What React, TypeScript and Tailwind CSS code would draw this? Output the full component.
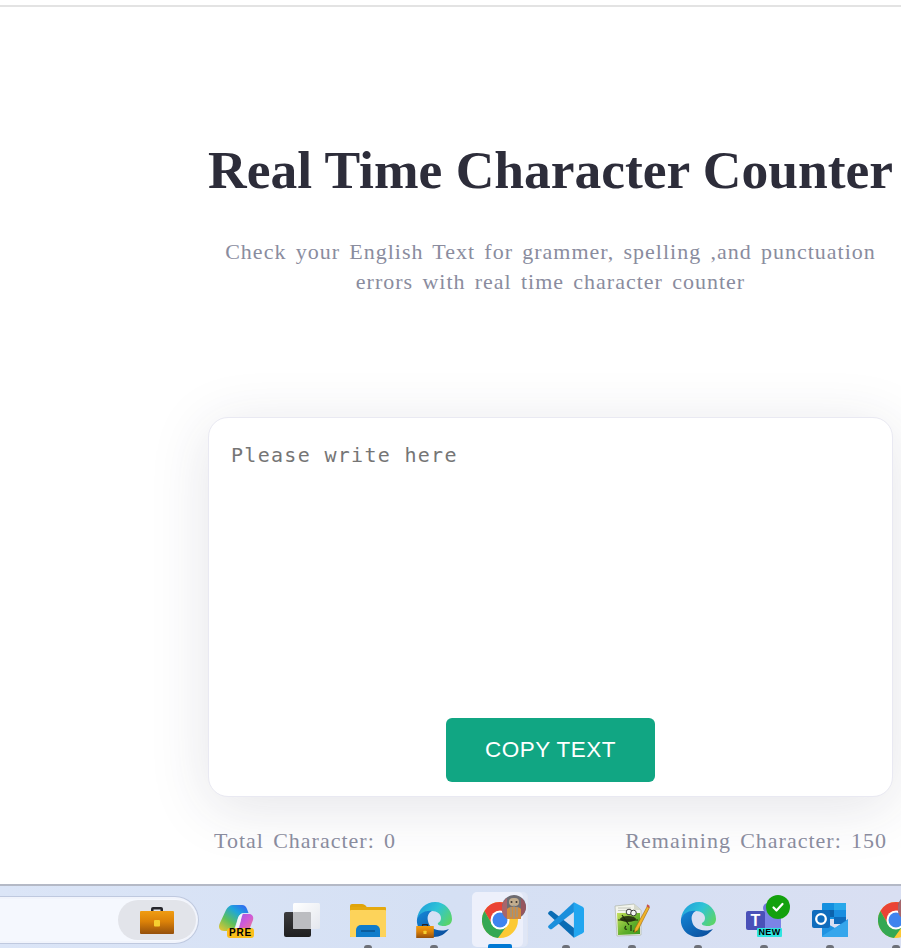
import React from "react";

const Dot = () => <span className="absolute bottom-0 left-1/2 -ml-1 h-[3px] w-2 rounded-t-full bg-[#6d7078]" />;

const Briefcase = ({ w = 34, h = 27, id = "bc" }: { w?: number; h?: number; id?: string }) => (
  <svg width={w} height={h} viewBox="0 0 34 27">
    <defs>
      <linearGradient id={id} x1="0" y1="0" x2="0" y2="1">
        <stop offset="0" stopColor="#f09c12" />
        <stop offset="0.45" stopColor="#dc8208" />
        <stop offset="1" stopColor="#95500c" />
      </linearGradient>
    </defs>
    <path d="M11 5V2A2 2 0 0 1 13 0h8a2 2 0 0 1 2 2v3h-2.500V2.500h-7V5Z" fill="#26262c" />
    <rect x="0" y="4" width="34" height="23" rx="1" fill={`url(#${id})`} />
    <rect x="14" y="13" width="6" height="6.500" rx="1" fill="#f6cf30" />
  </svg>
);

const Copilot = () => (
  <div className="relative h-[36px] w-[36px]">
    <svg width="36" height="32" viewBox="0 0 36 32" className="absolute left-0 top-[2px]">
      <defs>
        <linearGradient id="cpa" x1="0" y1="1" x2="0.800" y2="0">
          <stop offset="0" stopColor="#f3c62f" />
          <stop offset="0.4" stopColor="#5ec05c" />
          <stop offset="0.75" stopColor="#1ea5dc" />
          <stop offset="1" stopColor="#2f6ff0" />
        </linearGradient>
        <linearGradient id="cpb" x1="0" y1="0" x2="1" y2="1">
          <stop offset="0" stopColor="#8a5ce8" />
          <stop offset="0.5" stopColor="#d05ad8" />
          <stop offset="1" stopColor="#f28a70" />
        </linearGradient>
      </defs>
      <path d="M15 1h9c2.500 0 4 1.500 5 4l1.500 4H26c-3 0-5 2-6 5l-3 9c-1 3-3 4-6 4H6C2 27 0 24 1.500 20L8 6c1.500-3 4-5 7-5Z" fill="url(#cpa)" />
      <path d="M23 10h8c3 0 5 2.500 4 6l-3.500 9c-1.500 3-4 5-7 5h-9c2.500 0 4-1.500 5-4l2.500-10c.5-3 0-6 0-6Z" fill="url(#cpb)" />
      <path d="M20 14c1-3 3-4.500 5-4.500-1 2-1.500 4-2 6l-2.500 8c-.8 3-2.500 3.500-4.500 3.500 1-1 1.500-2.500 2-4Z" fill="#f3f5fb" />
    </svg>
    <span className="absolute left-[9px] top-[26px] flex h-[10px] w-[27px] items-center justify-center rounded-[3px] bg-[#fbbf1a] font-['Liberation_Sans',sans-serif] text-[10px] font-bold leading-none tracking-[0.8px] text-black">
      PRE
    </span>
  </div>
);

const TaskView = () => (
  <svg width="36" height="34" viewBox="0 0 36 34">
    <defs>
      <linearGradient id="tvd" x1="0" y1="0" x2="0" y2="1">
        <stop offset="0" stopColor="#3c3c3e" />
        <stop offset="1" stopColor="#1f1f20" />
      </linearGradient>
      <linearGradient id="tvw" x1="0" y1="0" x2="1" y2="1">
        <stop offset="0" stopColor="#ffffff" />
        <stop offset="1" stopColor="#e4e7ee" />
      </linearGradient>
    </defs>
    <rect x="0" y="9" width="27" height="25" rx="2" fill="url(#tvd)" />
    <rect x="9" y="0" width="27" height="26" rx="1.500" fill="url(#tvw)" />
    <rect x="9" y="9" width="18" height="17" rx="1" fill="#bcbdc1" />
  </svg>
);

const Folder = () => (
  <svg width="36" height="33" viewBox="0 0 36 33">
    <path d="M0 2a2 2 0 0 1 2-2h10c2 0 3 1 4 2l2 3H0Z" fill="#e0a40a" />
    <rect x="0" y="3" width="36" height="30" rx="1" fill="#e5a90e" />
    <path d="M0 7a1 1 0 0 1 1-1h34a1 1 0 0 1 1 1v25a1 1 0 0 1-1 1H1a1 1 0 0 1-1-1Z" fill="#fdd35a" />
    <path d="M6 33v-7a5 5 0 0 1 5-5h14a5 5 0 0 1 5 5v7Z" fill="#0f7ccb" />
    <rect x="11" y="26" width="14" height="2" fill="#0a5d9e" />
  </svg>
);

const EdgeIcon = ({ id }: { id: string }) => (
  <svg width="36" height="36" viewBox="0 0 36 36">
    <defs>
      <linearGradient id={`${id}a`} x1="0" y1="0.200" x2="1" y2="0.700">
        <stop offset="0" stopColor="#1f9fdc" />
        <stop offset="0.500" stopColor="#2fc4d6" />
        <stop offset="1" stopColor="#5ad46a" />
      </linearGradient>
      <linearGradient id={`${id}b`} x1="0" y1="0" x2="0.800" y2="1">
        <stop offset="0" stopColor="#1488d8" />
        <stop offset="1" stopColor="#0a4f9e" />
      </linearGradient>
    </defs>
    <path d="M1 17C2 7 10 0 19 0c10 0 17 8 17 17 0 5-4 7-8 7-4 0-7-1-6-3 2-1 3-3 3-5 0-4-4-7-9-7C9 9 3 12 1 17Z" fill={`url(#${id}a)`} />
    <path d="M1 17c2-6 9-9 15-8-4 2-5 6-4 10 1 7 9 11 18 9l3-1c-4 5-9 8-15 8C8 35 0 27 1 17Z" fill={`url(#${id}b)`} />
  </svg>
);

const EdgeWork = () => (
  <div className="relative h-[36px] w-[36px]">
    <EdgeIcon id="eg1" />
    <div className="absolute bottom-0 left-0 leading-[0]">
      <Briefcase w={18} h={14} id="bc2" />
    </div>
  </div>
);

const Avatar = () => (
  <svg width="24" height="24" viewBox="0 0 24 24" className="absolute left-[20px] top-[-7px]">
    <circle cx="12" cy="12" r="12" fill="#6e6c72" />
    <path d="M0 12a12 12 0 0 1 5-9v21a12 12 0 0 1-5-12Z" fill="#a8656b" />
    <path d="M24 12a12 12 0 0 0-5-9v18a12 12 0 0 0 5-9Z" fill="#96555e" />
    <rect x="7" y="3" width="10" height="8" rx="4" fill="#c2ad8e" />
    <path d="M5 24V14c2-3 12-3 14 0v10Z" fill="#d38b3e" />
    <path d="M9 12v10M12 10v14M15 12v10" stroke="#7e99a8" strokeWidth="1" />
    <circle cx="9.500" cy="7" r="1" fill="#3a3330" />
    <circle cx="14.500" cy="7" r="1" fill="#3a3330" />
  </svg>
);

const Chrome = ({ badge = false }: { badge?: boolean }) => (
  <div className="relative h-[36px] w-[36px]">
    <svg width="36" height="36" viewBox="0 0 36 36">
      <circle cx="18" cy="18" r="18" fill="#fcc934" />
      <path d="M18 0a18 18 0 0 1 15.600 9H18a9 9 0 0 0-7.800 13.500L2.400 9A18 18 0 0 1 18 0Z" fill="#ea4335" />
      <path d="M2.400 9l7.800 13.500a9 9 0 0 0 15.600 0L16 36A18 18 0 0 1 2.400 9Z" fill="#34a853" />
      <circle cx="18" cy="18" r="9.500" fill="#fff" />
      <circle cx="18" cy="18" r="7.500" fill="#3f84ee" />
    </svg>
    {badge && <Avatar />}
  </div>
);

const VSCode = () => (
  <svg width="36" height="36" viewBox="0 0 100 100">
    <path d="M2 35Q-1 32 1 29L5 25Q8 23 11 25L72 72V99Z" fill="#0a6cb4" />
    <path d="M72 1V28L11 75Q8 77 5 75L1 71Q-1 68 2 65Z" fill="#1a8fdc" />
    <path d="M72 1L96 13Q100 15 100 19V81Q100 85 96 87L72 99Z" fill="#22a6f0" />
  </svg>
);

const Notepad = () => (
  <svg width="36" height="34" viewBox="0 0 36 34">
    <defs>
      <linearGradient id="npg" x1="0" y1="0" x2="1" y2="1">
        <stop offset="0" stopColor="#c6e05a" />
        <stop offset="0.600" stopColor="#5fae2a" />
        <stop offset="1" stopColor="#3a9a22" />
      </linearGradient>
    </defs>
    <path d="M1 3L20 1 27 7 27 32 3 33Z" fill="#f2f4ec" stroke="#aeb4a8" strokeWidth="0.700" />
    <path d="M20 1V7H27Z" fill="#d5d9cc" />
    <path d="M4 5H17M4 7.500H19" stroke="#b9bdb2" strokeWidth="0.800" />
    <path d="M3 10H26V31L4 32Z" fill="url(#npg)" />
    <circle cx="15" cy="9" r="2.800" fill="#f5f5f5" stroke="#2f2f2f" strokeWidth="0.900" />
    <circle cx="19.500" cy="10" r="2.800" fill="#f5f5f5" stroke="#2f2f2f" strokeWidth="0.900" />
    <ellipse cx="14" cy="16" rx="8" ry="3" fill="#2e3d12" />
    <path d="M4 17H24M8 12L15 22M12 23C10 25 11 27 13 26M17 22V28M19 28H23" stroke="#1f2b0c" strokeWidth="1.200" fill="none" />
    <path d="M33.500 3L35.500 4.500 24 27 20.500 29.500 21 25.500Z" fill="#f0b429" stroke="#a0660f" strokeWidth="0.600" />
    <path d="M33.300 1.300L35.800 3 34.800 5 32.500 3.300Z" fill="#c9514a" />
  </svg>
);

const Teams = () => (
  <div className="relative h-[36px] w-[36px]">
    <svg width="36" height="30" viewBox="0 0 36 30" className="absolute left-0 top-0">
      <circle cx="22" cy="6" r="5" fill="#6f77d8" />
      <rect x="14" y="9" width="21" height="21" rx="2" fill="#7b83e6" />
      <rect x="0" y="9" width="19" height="19" rx="2" fill="#4a50b8" />
    </svg>
    <span className="absolute left-0 top-[9px] flex h-[19px] w-[19px] items-center justify-center font-['Liberation_Sans',sans-serif] text-[16px] font-bold leading-none text-white">
      T
    </span>
    <span className="absolute left-[11px] top-[26px] flex h-[9px] w-[25px] items-center justify-center rounded-[1px] bg-[#2ee5e0] font-['Liberation_Sans',sans-serif] text-[9px] font-bold leading-none tracking-[0.3px] text-black">
      NEW
    </span>
    <div className="absolute left-[20px] top-[-7px] flex h-[24px] w-[24px] items-center justify-center rounded-full bg-[#13a10e]">
      <svg width="14" height="14" viewBox="0 0 14 14">
        <path d="M2.500 7.500l3 3 6-6.500" stroke="#fff" strokeWidth="2.200" fill="none" strokeLinecap="round" strokeLinejoin="round" />
      </svg>
    </div>
  </div>
);

const Outlook = () => (
  <svg width="36" height="34" viewBox="0 0 36 34">
    <path d="M10 1a1 1 0 0 1 1-1h22a1 1 0 0 1 1 1v15H10Z" fill="#1490df" />
    <rect x="22" y="0" width="12" height="7" fill="#28a8ea" />
    <rect x="22" y="7" width="12" height="7" fill="#1a8ee0" />
    <rect x="10" y="7" width="12" height="7" fill="#0b63ad" />
    <rect x="22" y="14" width="12" height="7" fill="#0f6cbd" />
    <path d="M10 18l13 7 13-9v17a1 1 0 0 1-1 1H11a1 1 0 0 1-1-1Z" fill="#1f93e2" />
    <path d="M10 33l16-10 10-6v16a1 1 0 0 1-1 1H11a1 1 0 0 1-1-1Z" fill="#35a6ec" />
    <rect x="0" y="7" width="18" height="18" rx="2" fill="#0f6cbd" />
    <circle cx="9" cy="16" r="4.800" fill="none" stroke="#fff" strokeWidth="2.300" />
  </svg>
);

const Slot = ({ children, dot = true }: { children: React.ReactNode; dot?: boolean }) => (
  <div className="relative flex h-[62px] w-[66px] shrink-0 items-center justify-center pt-[6px]">
    {children}
    {dot && <Dot />}
  </div>
);

export default function App() {
  return (
    <div className="flex h-[948px] w-[901px] flex-col overflow-hidden bg-white">
      <div className="mt-[5px] h-[2px] w-full shrink-0 bg-[#e3e3e3]" />
      <main className="h-[877px] shrink-0 overflow-hidden pl-[208px]">
        <div className="w-[685px]">
          <h1 className="mt-[133px] whitespace-nowrap text-center font-['Liberation_Serif',serif] text-[53.500px] font-bold leading-[60px] text-[#2d2d3a]">
            Real Time Character Counter
          </h1>
          <p className="mx-auto mt-[37px] w-[670px] text-center font-['Liberation_Serif',serif] text-[22px] leading-[30px] tracking-[1px] [word-spacing:2.750px] text-[#8a8c9e]">
            Check your English Text for grammer, spelling ,and punctuation errors with real time character counter
          </p>
          <section className="mt-[120px] flex h-[380px] flex-col items-center justify-end rounded-[20px] border border-[#e9e9f2] bg-white pb-[14px] shadow-[0_10px_60px_rgba(45,45,80,0.13)]">
            <p className="mb-auto w-full whitespace-nowrap px-[22px] pt-[24px] font-['DejaVu_Sans_Mono',monospace] text-[20px] leading-[26px] tracking-[1.300px] text-[#757575]">
              Please write here
            </p>
            <button className="h-[64px] w-[209px] rounded-[6px] bg-[#11a683] font-['Liberation_Sans',sans-serif] text-[22.500px] tracking-[0.500px] text-white">
              COPY TEXT
            </button>
          </section>
          <div className="relative mt-[29px] flex justify-between px-[6px] font-['Liberation_Serif',serif] text-[22px] leading-[30px] tracking-[1px] [word-spacing:2.750px] text-[#8a8c9e]">
            <span>Total Character: 0</span>
            <span>Remaining Character: 150</span>
          </div>
        </div>
      </main>
      <footer className="relative flex h-[64px] shrink-0 items-start overflow-hidden border-t-2 border-[#b4b9c6] bg-[linear-gradient(90deg,#dbe5f7,#d5e0f4_50%,#d9dff2)]">
        <div className="mt-[11px] flex h-[46px] w-[198px] shrink-0 items-center justify-end rounded-r-full border-y-2 border-r-2 border-[#f1f4fc] bg-[#f5f8fe] shadow-[0_0_0_1px_#bfc9df]">
          <div className="flex h-[40px] w-[78px] items-center justify-center rounded-full bg-[#e2e4ea]">
            <Briefcase />
          </div>
        </div>
        <div className="ml-[5px] flex h-[62px]">
          <Slot dot={false}><Copilot /></Slot>
          <Slot dot={false}><TaskView /></Slot>
          <Slot><Folder /></Slot>
          <Slot><EdgeWork /></Slot>
          <Slot dot={false}>
            <span className="absolute bottom-[1px] left-[8px] top-[6px] w-[53px] rounded-[5px] border-r border-[#dfe4f0] bg-[#dfe6f6]" />
            <span className="absolute bottom-[1px] left-[5px] top-[6px] w-[51px] rounded-[5px] bg-[#edf0fb]" />
            <div className="relative"><Chrome badge /></div>
            <span className="absolute bottom-0 left-1/2 -ml-[12px] h-[4px] w-[24px] rounded-t-[2px] bg-[#0078d4]" />
          </Slot>
          <Slot><VSCode /></Slot>
          <Slot><Notepad /></Slot>
          <Slot><EdgeIcon id="eg2" /></Slot>
          <Slot><Teams /></Slot>
          <Slot><Outlook /></Slot>
          <Slot><Chrome badge /></Slot>
        </div>
      </footer>
    </div>
  );
}
